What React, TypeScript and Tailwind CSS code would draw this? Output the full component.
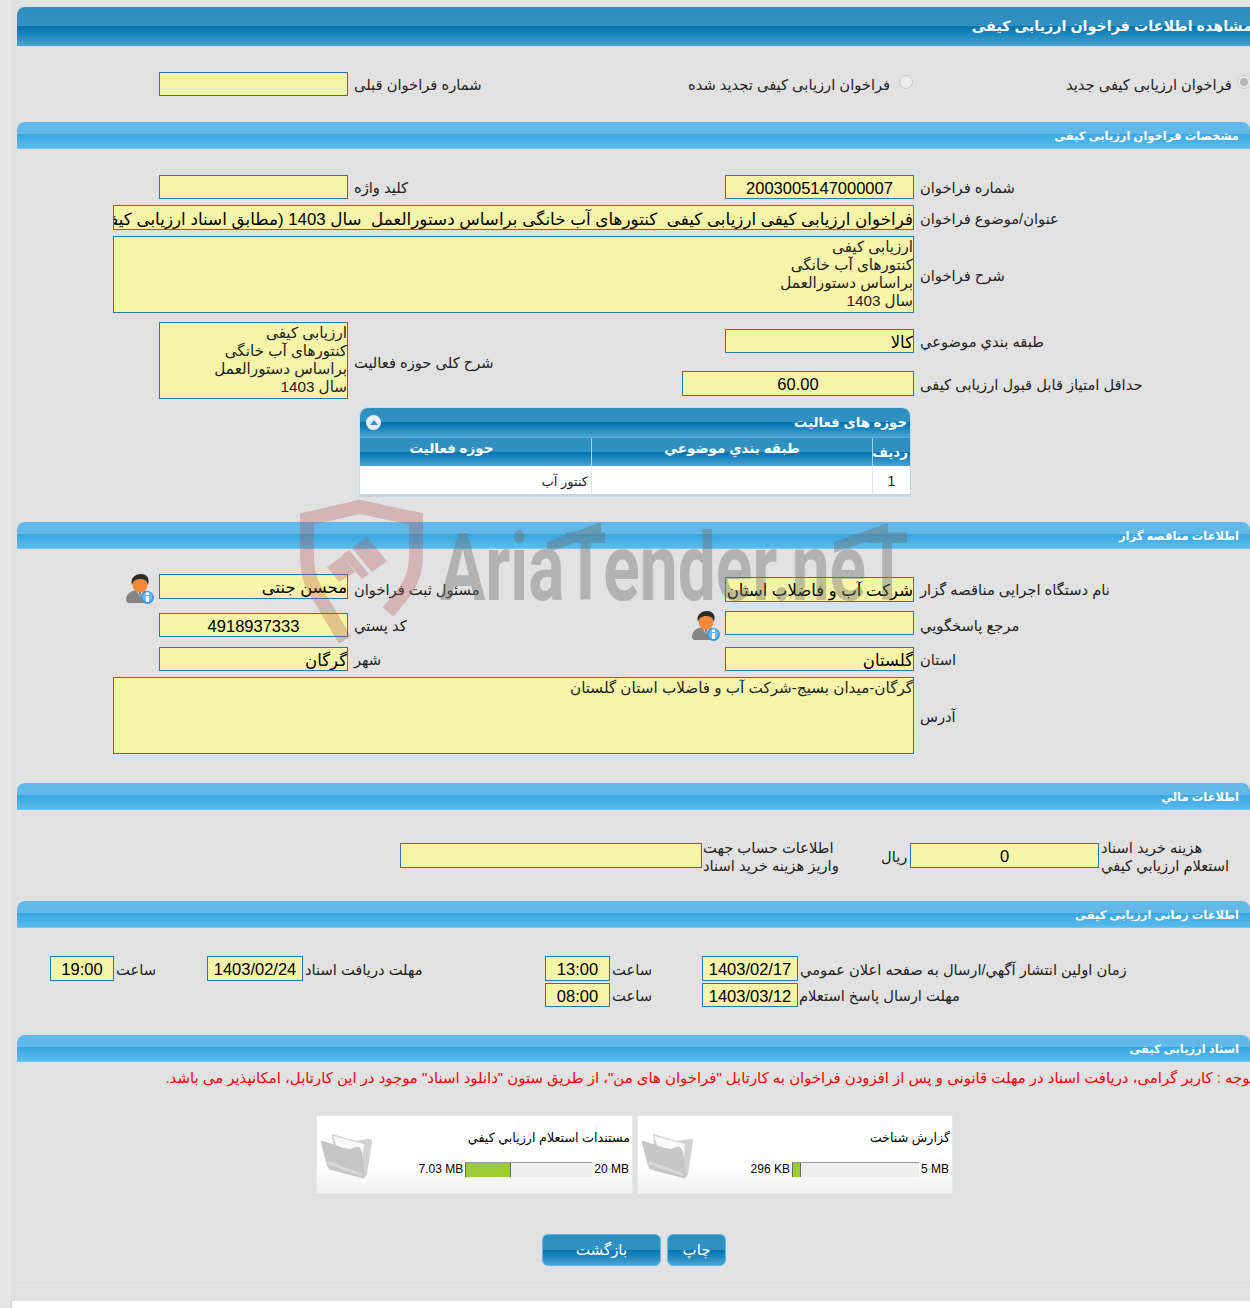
const inputBox = 'shrink-0 border border-[#2b76ac] bg-[#f6f4a8] text-black overflow-hidden whitespace-pre';
const darkBar = 'bg-[linear-gradient(#2e8ebf_0%,#3192c2_50%,#0072ae_50%,#4aa2d1_100%)]';

const Box = ({ w, h = 24, text, center, cls = 'text-[16.5px]' }: { w: number; h?: number; text?: string; center?: boolean; cls?: string }) => (
  <div
    dir="rtl"
    style={{ width: w, height: h, lineHeight: `${h}px` }}
    className={`${inputBox} ${center ? 'text-center' : 'text-right'} ${cls}`}
  >
    {text}
  </div>
);

const Label = ({ w, children, cls = '' }: { w?: number; children: React.ReactNode; cls?: string }) => (
  <div
    dir="rtl"
    style={w ? { width: w } : undefined}
    className={`shrink-0 pt-[2px] text-left text-[14.7px] leading-[18px] whitespace-nowrap text-[#222] ${cls.includes('pl-') ? '' : 'pl-[6px]'} ${cls}`}
  >
    {children}
  </div>
);

const Area = ({ w, lines }: { w: number; lines: string[] }) => (
  <div dir="rtl" style={{ width: w }} className="h-[77px] shrink-0 border border-[#2b76ac] bg-[#f6f4a8] pt-[1px] text-right text-[15.2px] leading-[18px] text-[#222]">
    {lines.map((l) => (
      <div key={l}>{l}</div>
    ))}
  </div>
);

const SectionBar = ({ title, cls = '' }: { title: string; cls?: string }) => (
  <div
    dir="rtl"
    className={`ml-[17px] h-[27px] w-[1233px] rounded-t-[8px] border-b border-[#6fc6f1] bg-[linear-gradient(#62b9e9_0%,#62b9e9_48%,#39a7e0_48%,#5bbbed_100%)] pr-[11px] text-right text-[11.5px] leading-[29px] font-bold text-white ${cls}`}
  >
    {title}
  </div>
);

const PersonIcon = () => (
  <svg width="28" height="30" viewBox="0 0 28 30" className="shrink-0">
    <path d="M0 27c0-6 3-9 7-10l3-1h8l3 2c2 1 3 3 3 9l-2 2H2z" fill="#858585" />
    <path d="M10 16l4 7 4-7z" fill="#dedede" />
    <path d="M13 18l1 5 1-5z" fill="#555" />
    <ellipse cx="14" cy="10.500" rx="7.500" ry="8" fill="#f5873a" />
    <path d="M6 11C4 4 9 0 15 0c6 0 9 4 7 11-1-4-3-6-8-6-4 0-7 2-8 6z" fill="#2b2b2b" />
    <circle cx="21.500" cy="23.500" r="6.500" fill="#3a97e0" />
    <circle cx="21.500" cy="23" r="5" fill="#6cb9f0" />
    <rect x="20" y="22" width="3" height="6" fill="#fff" />
    <rect x="20" y="18.500" width="3" height="2.500" fill="#fff" />
  </svg>
);

const FolderIcon = () => (
  <svg width="54" height="48" viewBox="0 0 54 48" className="shrink-0 blur-[0.4px]">
    <path d="M12 2L36 9L47 7Q53 6 52 10L47 42Q46 46 43 44L14 24Z" fill="#d2d2d2" />
    <path d="M13 4L44 12L42 32L18 18Z" fill="#f9f9f9" />
    <path d="M1 11Q0 8 3 9L18 14Q24 17 30 17L36 15Q40 14 42 20L45 43Q45 47 42 46L11 38Q8 37 7 34Z" fill="#c6c6c6" />
    <path d="M7 32L42 44L43 42L8 29Z" fill="#d8d8d8" />
  </svg>
);

const Doc = ({ title, used, total, pct, w }: { title: string; used: string; total: string; pct: number; w: string }) => (
  <div className={`flex h-[79px] shrink-0 items-start border border-[#e8e8e8] bg-[linear-gradient(#ffffff_0%,#ffffff_65%,#efefef_100%)] ${w}`}>
    <div className="mt-[16px] ml-[3px]">
      <FolderIcon />
    </div>
    <div className="min-w-0 flex-1">
      <div dir="rtl" className="mt-[13px] pr-[2px] text-right text-[12.7px] leading-[18px] whitespace-nowrap text-black">
        {title}
      </div>
      <div className="mt-[15px] flex items-center justify-end pr-[3px] font-['Liberation_Sans'] text-[12px] leading-[15px] text-black">
        <span>{used}</span>
        <div className="mx-[2px] h-[15px] w-[127px] border-t border-[#999] bg-[#eee]">
          <div style={{ width: `${pct}%` }} className="h-full border-x border-x-[#666] bg-[#9acd32]" />
        </div>
        <span>{total}</span>
      </div>
    </div>
  </div>
);

const Watermark = () => (
  <div className="pointer-events-none absolute top-[495px] left-[295px] h-[150px] w-[620px]">
    <svg width="135" height="150" viewBox="295 495 135 150" className="absolute top-0 left-0">
      <path
        d="M345 640L314 588Q307 575 307 555V519L360 507L416 519V555Q416 575 406 590L388 612"
        fill="none"
        stroke="#b44646"
        strokeOpacity="0.28"
        strokeWidth="14"
      />
      <path
        d="M367 537L387 561L372 572L352 548zM349 550L369 574L362 579L342 555zM327 567L343 556L355 572L339 582z"
        fill="#b44646"
        fillOpacity="0.28"
      />
    </svg>
    <div className="absolute top-0 left-0 h-full w-full opacity-40">
      <div className="absolute top-[28px] left-[145px] origin-left scale-x-[0.72] font-['Roboto'] text-[94px] leading-[90px] font-bold whitespace-nowrap text-[#6e6e6e]">
        AriaTender.neT
      </div>
      <svg width="620" height="150" viewBox="295 495 620 150" className="absolute top-0 left-0">
        <path d="M547 542L601 522V533L547 553zM834 542L888 523V534L834 553z" fill="#6e6e6e" />
      </svg>
    </div>
  </div>
);

export default function App() {
  return (
    <div className="relative h-[1308px] w-[1250px] overflow-hidden bg-[linear-gradient(to_right,#e7e7e7_10px,#e1e1e1_10px)] pt-[7px] font-['Liberation_Sans','DejaVu_Sans',sans-serif]">
      <div dir="rtl" className={`ml-[17px] h-[39px] w-[1240px] rounded-tl-[8px] ${darkBar} pr-[5px] text-right text-[14.3px] leading-[38px] font-bold text-white`}>
        مشاهده اطلاعات فراخوان ارزیابی کیفی
      </div>

      <div className="mt-[26px] flex h-[24px] items-center pl-[159px]">
        <Box w={189} />
        <Label w={340}>شماره فراخوان قبلی</Label>
        <Label w={211} cls="pl-0">فراخوان ارزیابی کیفی تجدید شده</Label>
        <span className="mb-[4px] h-[14px] w-[14px] shrink-0 rounded-full border border-[#c8c8c8] bg-[#ececec]" />
        <Label w={324} cls="pl-[153px]">فراخوان ارزیابی کیفی جدید</Label>
        <span className="mb-[4px] flex h-[14px] w-[14px] shrink-0 items-center justify-center rounded-full border border-[#c8c8c8] bg-[#ececec]">
          <span className="h-[8px] w-[8px] rounded-full bg-[#b5b5b5]" />
        </span>
      </div>

      <SectionBar title="مشخصات فراخوان ارزیابی کیفی" cls="mt-[26px]" />

      <div className="mt-[26px] flex h-[24px] items-center pl-[159px]">
        <Box w={189} />
        <Label w={377}>کلید واژه</Label>
        <Box w={189} text="2003005147000007" center />
        <Label>شماره فراخوان</Label>
      </div>
      <div className="mt-[6px] flex h-[25px] items-center pl-[113px]">
        <Box w={801} h={25} cls="pt-[1px] text-[16.8px]" text="فراخوان ارزیابی کیفی ارزیابی کیفی  کنتورهای آب خانگی براساس دستورالعمل  سال 1403 (مطابق اسناد ارزیابی کیفی)" />
        <Label>عنوان/موضوع فراخوان</Label>
      </div>
      <div className="mt-[6px] flex items-center pl-[113px]">
        <Area w={801} lines={['ارزیابی کیفی', 'کنتورهای آب خانگی', 'براساس دستورالعمل', 'سال 1403']} />
        <Label>شرح فراخوان</Label>
      </div>

      <div className="mt-[9px] flex items-start pl-[159px]">
        <Area w={189} lines={['ارزیابی کیفی', 'کنتورهای آب خانگی', 'براساس دستورالعمل', 'سال 1403']} />
        <Label w={377} cls="mt-[30px]">شرح کلی حوزه فعالیت</Label>
        <div>
          <div className="mt-[7px] flex h-[24px] items-center">
            <Box w={189} text="کالا" />
            <Label>طبقه بندي موضوعي</Label>
          </div>
          <div className="mt-[18px] -ml-[43px] flex h-[25px] items-center">
            <Box w={232} h={25} text="60.00" center />
            <Label>حداقل امتیاز قابل قبول ارزیابی کیفی</Label>
          </div>
        </div>
      </div>

      <div dir="rtl" className="mt-[9px] ml-[360px] w-[550px] overflow-hidden rounded-t-[8px] border-b-2 border-[#c5d6e4] bg-white text-[13.300px] ring-1 ring-[#c5d6e4]">
        <div className={`relative h-[29px] ${darkBar} pr-[3px] leading-[29px] font-bold text-white`}>
          حوزه های فعالیت
          <span className="absolute top-[7px] left-[6px] flex h-[15px] w-[15px] items-center justify-center rounded-full bg-[#e6f0f6]">
            <span className="h-0 w-0 border-x-[4px] border-b-[5px] border-x-transparent border-b-[#2e8ebf]" />
          </span>
        </div>
        <div className={`flex h-[29px] border-t border-[#5aaedb] ${darkBar} text-[13.500px] font-bold text-white`}>
          <div className="w-[38px] border-l border-[#9fd6f0] pt-[6px] pr-[2px] leading-[18px]">رديف</div>
          <div className="w-[281px] border-l border-[#9fd6f0] pt-[2px] text-center leading-[18px]">طبقه بندي موضوعي</div>
          <div className="flex-1 pt-[2px] pr-[48px] text-center leading-[18px]">حوزه فعالیت</div>
        </div>
        <div className="flex h-[28px] leading-[31px] text-[#222]">
          <div className="w-[38px] border-l border-[#e2e2e2] text-center text-[14px]">1</div>
          <div className="w-[281px] border-l border-[#e2e2e2]" />
          <div className="flex-1 pr-[3px] text-[13px]">کنتور آب</div>
        </div>
      </div>

      <SectionBar title="اطلاعات مناقصه گزار" cls="mt-[26px]" />

      <div className="mt-[25px] flex h-[28px] items-start pl-[126px]">
        <PersonIcon />
        <div className="ml-[5px]">
          <Box w={189} h={25} text="محسن جنتی" />
        </div>
        <Label w={377} cls="mt-[5px]">مسئول ثبت فراخوان</Label>
        <div className="mt-[3px]">
          <Box w={189} h={25} text="شرکت آب و فاضلاب استان گلستان" />
        </div>
        <Label cls="mt-[5px]">نام دستگاه اجرایی مناقصه گزار</Label>
      </div>
      <div className="mt-[9px] flex h-[29px] items-start pl-[159px]">
        <div className="mt-[2px]">
          <Box w={189} text="4918937333" center />
        </div>
        <Label w={344} cls="mt-[4px]">کد پستي</Label>
        <PersonIcon />
        <div className="ml-[5px]">
          <Box w={189} />
        </div>
        <Label cls="mt-[4px]">مرجع پاسخگويي</Label>
      </div>
      <div className="mt-[7px] flex h-[24px] items-center pl-[159px]">
        <Box w={189} text="گرگان" />
        <Label w={377}>شهر</Label>
        <Box w={189} text="گلستان" />
        <Label>استان</Label>
      </div>
      <div className="mt-[6px] flex items-center pl-[113px]">
        <Area w={801} lines={['گرگان-میدان بسیج-شرکت آب و فاضلاب استان گلستان']} />
        <Label>آدرس</Label>
      </div>

      <SectionBar title="اطلاعات مالي" cls="mt-[29px]" />

      <div className="mt-[33px] flex h-[25px] items-center pl-[400px]">
        <Box w={302} h={25} />
        <Label w={179} cls="pl-[1px]">
          اطلاعات حساب جهت
          <br />
          واریز هزینه خرید اسناد
        </Label>
        <Label w={29} cls="pl-0">ریال</Label>
        <Box w={189} h={25} text="0" center />
        <Label cls="pl-[2px]">
          هزینه خرید اسناد
          <br />
          استعلام ارزيابي کيفي
        </Label>
      </div>

      <SectionBar title="اطلاعات زمانی ارزیابی کیفی" cls="mt-[33px]" />

      <div className="mt-[28px] flex h-[25px] items-center pl-[50px]">
        <Box w={64} h={25} text="19:00" center />
        <Label w={93} cls="pl-[2px]">ساعت</Label>
        <Box w={96} h={25} text="1403/02/24" center />
        <Label w={242} cls="pl-[2px]">مهلت دریافت اسناد</Label>
        <Box w={65} h={25} text="13:00" center />
        <Label w={92} cls="pl-[2px]">ساعت</Label>
        <Box w={96} h={25} text="1403/02/17" center />
        <Label cls="pl-[2px]">زمان اولین انتشار آگهي/ارسال به صفحه اعلان عمومي</Label>
      </div>
      <div className="mt-[2px] flex h-[24px] items-center pl-[545px]">
        <Box w={65} text="08:00" center />
        <Label w={92} cls="pl-[2px]">ساعت</Label>
        <Box w={96} text="1403/03/12" center />
        <Label cls="pl-[1px]">مهلت ارسال پاسخ استعلام</Label>
      </div>

      <SectionBar title="اسناد ارزیابی کیفی" cls="mt-[28px]" />

      <div dir="rtl" className="mt-[7px] -mr-[4px] h-[18px] text-right text-[14.9px] leading-[18px] whitespace-nowrap text-[#f00]">
        توجه : کاربر گرامی، دریافت اسناد در مهلت قانونی و پس از افزودن فراخوان به کارتابل "فراخوان های من"، از طریق ستون "دانلود اسناد" موجود در این کارتابل، امکانپذیر می باشد.
      </div>

      <div className="mt-[28px] flex gap-[4px] pl-[316px]">
        <Doc w="w-[317px]" title="مستندات استعلام ارزيابي کيفي" used="7.03 MB" total="20 MB" pct={36} />
        <Doc w="w-[316px]" title="گزارش شناخت" used="296 KB" total="5 MB" pct={7} />
      </div>

      <div className="mt-[40px] flex h-[32px] gap-[6px] pl-[542px]">
        <button className={`w-[119px] rounded-[6px] border border-[#5ab9e9] ${darkBar} pt-[1px] text-[15px] text-white`}>بازگشت</button>
        <button className={`w-[59px] rounded-[6px] border border-[#5ab9e9] ${darkBar} pt-[1px] text-[15px] text-white`}>چاپ</button>
      </div>

      <div className="mt-[19px] ml-[10px] h-[16px] border-t border-[#e6e6e6]" />
      <div className="ml-[10px] h-[7px] border-l-2 border-[#d5d5d5] bg-white" />

      <Watermark />
    </div>
  );
}
